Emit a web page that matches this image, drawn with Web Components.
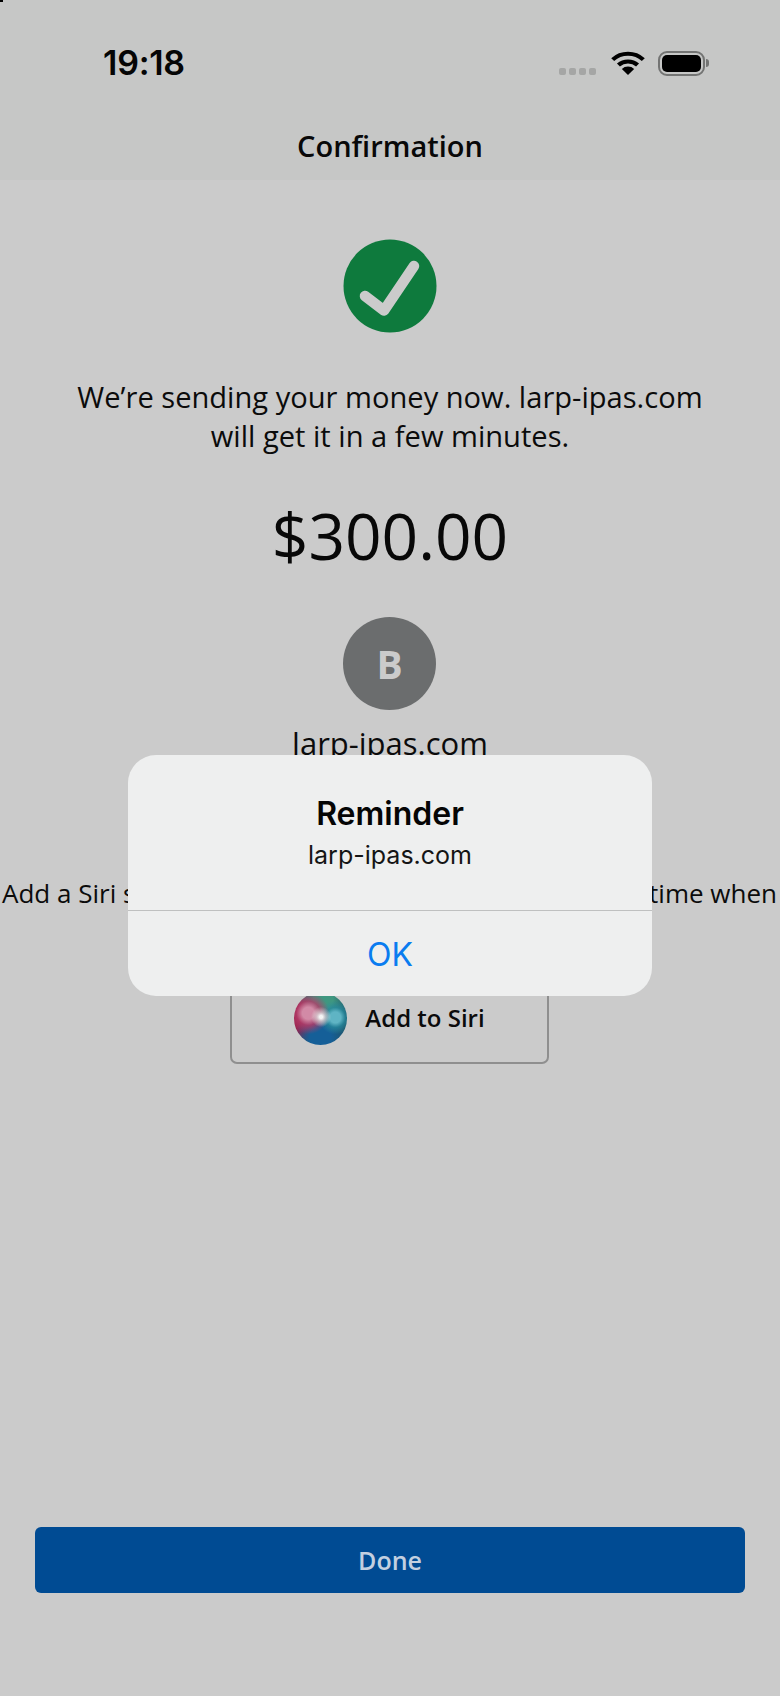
<!DOCTYPE html>
<html lang="en">
<head>
<meta charset="utf-8">
<title>Confirmation</title>
<style>
  html, body { margin: 0; padding: 0; background: #cbcbcb; }
  body { font-family: "Open Sans", "Liberation Sans", sans-serif; color: #0b0b0b; }
</style>
</head>
<body>
<confirmation-screen>
  <app-header slot="header" heading="Confirmation" time="19:18"></app-header>
  <check-badge></check-badge>
  <lead-text>We’re sending your money now. larp-ipas.com<br>will get it in a few minutes.</lead-text>
  <payment-summary amount="$300.00" initial="B" payee="larp-ipas.com"></payment-summary>
  <siri-hint before="Add a Siri shortcut" after="time when"></siri-hint>
  <siri-button label="Add to Siri"></siri-button>
  <done-button slot="footer">Done</done-button>
  <alert-dialog slot="overlay" heading="Reminder" text="larp-ipas.com" action="OK"></alert-dialog>
</confirmation-screen>

<script>
class ConfirmationScreen extends HTMLElement {
  constructor() {
    super();
    this.attachShadow({ mode: 'open' });
    this.shadowRoot.innerHTML = `
      <style>
        :host { display: flex; flex-direction: column; position: relative; width: 780px; height: 1696px; overflow: hidden; background: #cbcbcb; }
        main { flex: 1; display: flex; flex-direction: column; align-items: center; padding-top: 59px; }
        footer { padding: 0 35px 103px; }
      </style>
      <slot name="header"></slot>
      <main><slot></slot></main>
      <footer><slot name="footer"></slot></footer>
      <slot name="overlay"></slot>
    `;
  }
}

class AppHeader extends HTMLElement {
  constructor() {
    super();
    this.attachShadow({ mode: 'open' });
  }

  connectedCallback() {
    this.shadowRoot.innerHTML = `
      <style>
        :host { display: flex; flex-direction: column; height: 180px; background: linear-gradient(#000, #000) 0 0 / 3px 2px no-repeat, #c6c7c6; box-sizing: border-box; padding-top: 44px; }
        .status { display: flex; align-items: center; justify-content: space-between; height: 38px; padding: 0 71px 0 103px; }
        .time { font: 600 34px/38px Inter, "Liberation Sans", sans-serif; color: #050505; letter-spacing: -0.25px; }
        .icons { display: flex; align-items: center; }
        .dots { display: flex; gap: 3px; margin: 16px 15px 0 0; }
        .dots i { width: 7px; height: 7px; border-radius: 2px; background: #a5a6a5; }
        .battery { display: flex; align-items: center; margin-left: 13px; }
        .cell { box-sizing: border-box; width: 47px; height: 25px; border: 2px solid #737473; border-radius: 9px; padding: 2px; }
        .cell b { display: block; height: 100%; border-radius: 5px; background: #000; }
        .nub { width: 3px; height: 8px; margin-left: 1px; border-radius: 0 3px 3px 0; background: #737473; }
        h1 { margin: 45px 0 0; text-align: center; font: 600 29px/38px "Open Sans", sans-serif; color: #080808; }
      </style>
      <div class="status">
        <span class="time">${this.getAttribute('time') || ''}</span>
        <span class="icons">
          <span class="dots"><i></i><i></i><i></i><i></i></span>
          <svg width="34" height="24" viewBox="0 0 32 24" preserveAspectRatio="none" fill="none" stroke="#000">
            <path d="M1.6 8.6 A20.5 20.5 0 0 1 30.4 8.6" stroke-width="4"/>
            <path d="M7 14 A13 13 0 0 1 25 14" stroke-width="4"/>
            <path d="M16 24 L10.2 18 A8.2 8.2 0 0 1 21.8 18 Z" fill="#000" stroke="none"/>
          </svg>
          <span class="battery"><span class="cell"><b></b></span><span class="nub"></span></span>
        </span>
      </div>
      <h1>${this.getAttribute('heading') || ''}</h1>
    `;
  }
}

class CheckBadge extends HTMLElement {
  constructor() {
    super();
    this.attachShadow({ mode: 'open' });
    this.shadowRoot.innerHTML = `
      <style>:host { display: block; width: 94px; height: 94px; } svg { display: block; }</style>
      <svg width="94" height="94" viewBox="0 0 94 94">
        <circle cx="47" cy="47" r="46.5" fill="#0e7a3d"/>
        <path d="M22 57 L41 71.5 L71 27" fill="none" stroke="#cbcbcb" stroke-width="10.5" stroke-linecap="round" stroke-linejoin="round"/>
      </svg>
    `;
  }
}

class LeadText extends HTMLElement {
  constructor() {
    super();
    this.attachShadow({ mode: 'open' });
    this.shadowRoot.innerHTML = `
      <style>:host { display: block; margin-top: 45px; text-align: center; font-size: 29.1px; line-height: 39px; color: #0b0b0b; }</style>
      <slot></slot>
    `;
  }
}

class PaymentSummary extends HTMLElement {
  constructor() {
    super();
    this.attachShadow({ mode: 'open' });
  }

  connectedCallback() {
    this.shadowRoot.innerHTML = `
      <style>
        :host { display: flex; flex-direction: column; align-items: center; }
        .amount { margin-top: 38px; font-size: 64px; line-height: 83px; color: #080808; }
        .avatar { display: flex; align-items: center; justify-content: center; width: 93px; height: 93px; margin: 40px 1px 0 0; border-radius: 50%; background: #6b6d6e; color: #cbcbcb; font-size: 39px; font-weight: 700; }
        .payee { margin-top: 13px; font-size: 31px; line-height: 41px; color: #0b0b0b; }
      </style>
      <div class="amount">${this.getAttribute('amount') || ''}</div>
      <div class="avatar">${this.getAttribute('initial') || ''}</div>
      <div class="payee">${this.getAttribute('payee') || ''}</div>
    `;
  }
}

class SiriHint extends HTMLElement {
  constructor() {
    super();
    this.attachShadow({ mode: 'open' });
  }

  connectedCallback() {
    this.shadowRoot.innerHTML = `
      <style>
        :host { display: flex; justify-content: space-between; box-sizing: border-box; width: 780px; margin-top: 111px; padding: 0 3px 0 2px; font-size: 26px; line-height: 36px; white-space: nowrap; color: #0b0b0b; }
      </style>
      <span>${this.getAttribute('before') || ''}</span>
      <span>${this.getAttribute('after') || ''}</span>
    `;
  }
}

class SiriButton extends HTMLElement {
  constructor() {
    super();
    this.attachShadow({ mode: 'open' });
  }

  connectedCallback() {
    this.shadowRoot.innerHTML = `
      <style>
        :host { display: flex; align-items: center; justify-content: center; gap: 18px; box-sizing: border-box; width: 319px; height: 90px; margin: 63px 1px 0 0; border: 2px solid #8f8f8f; border-radius: 7px; }
        .orb { width: 53px; height: 53px; margin-bottom: 2px; border-radius: 50%;
          background:
            radial-gradient(circle at 51% 47%, #f4f4f4 0 4%, rgba(225,225,225,.7) 11%, rgba(200,200,200,0) 26%),
            radial-gradient(circle at 27% 40%, #d28aa6 0 12%, rgba(180,60,105,.8) 24%, rgba(170,40,90,0) 42%),
            radial-gradient(circle at 78% 48%, #5fb4c4 0 11%, rgba(40,140,160,.75) 20%, rgba(40,140,160,0) 34%),
            radial-gradient(circle at 55% 14%, #3f9780 0 18%, rgba(40,120,100,0) 48%),
            radial-gradient(circle at 50% 86%, #155f98 0 20%, rgba(20,80,135,0) 50%),
            radial-gradient(circle at 8% 50%, #96204a 0 25%, rgba(150,30,75,0) 48%),
            #1f5468; }
        span { margin-bottom: 2px; font: 650 24px/32px "Open Sans", sans-serif; color: #0b0b0b; }
      </style>
      <div class="orb"></div>
      <span>${this.getAttribute('label') || ''}</span>
    `;
  }
}

class DoneButton extends HTMLElement {
  constructor() {
    super();
    this.attachShadow({ mode: 'open' });
    this.shadowRoot.innerHTML = `
      <style>
        :host { display: flex; align-items: center; justify-content: center; height: 66px; border-radius: 6px; background: #004b93; color: #c3d0e0; font-size: 25px; font-weight: 550; }
      </style>
      <slot></slot>
    `;
  }
}

class AlertDialog extends HTMLElement {
  constructor() {
    super();
    this.attachShadow({ mode: 'open' });
  }

  connectedCallback() {
    this.shadowRoot.innerHTML = `
      <style>
        :host { display: block; position: absolute; left: 128px; top: 755px; width: 524px; height: 241px; border-radius: 28px; background: #eeefef; font-family: Inter, "Liberation Sans", sans-serif; text-align: center; }
        .body { box-sizing: border-box; height: 156px; padding-top: 39px; border-bottom: 1px solid #bfc0c0; }
        h2 { margin: 0; font-size: 32px; line-height: 40px; font-weight: 600; color: #050505; }
        p { margin: 1px 0 0; font-size: 25px; line-height: 40px; color: #151515; }
        .action { display: flex; align-items: center; justify-content: center; box-sizing: border-box; height: 85px; padding-top: 2px; font-size: 32px; color: #0a7cf0; }
      </style>
      <div class="body">
        <h2>${this.getAttribute('heading') || ''}</h2>
        <p>${this.getAttribute('text') || ''}</p>
      </div>
      <div class="action">${this.getAttribute('action') || ''}</div>
    `;
  }
}

customElements.define('confirmation-screen', ConfirmationScreen);
customElements.define('app-header', AppHeader);
customElements.define('check-badge', CheckBadge);
customElements.define('lead-text', LeadText);
customElements.define('payment-summary', PaymentSummary);
customElements.define('siri-hint', SiriHint);
customElements.define('siri-button', SiriButton);
customElements.define('done-button', DoneButton);
customElements.define('alert-dialog', AlertDialog);
</script>
</body>
</html>
